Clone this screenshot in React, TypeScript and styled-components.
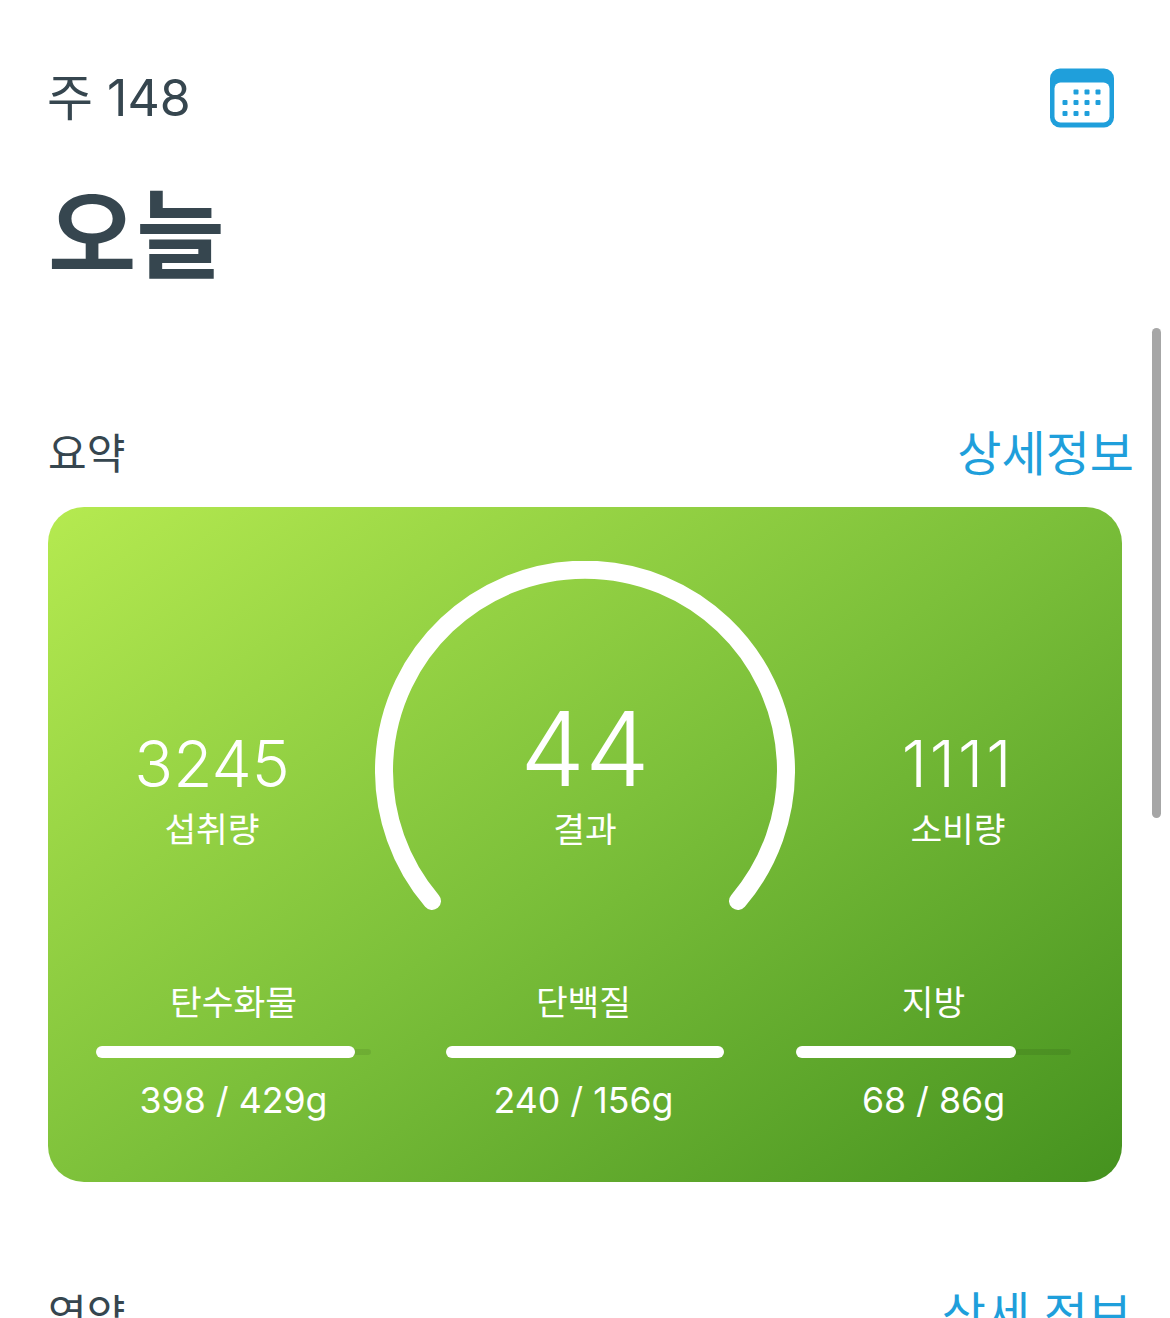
import styled, { createGlobalStyle } from "styled-components";

const FONT = `Inter, "Noto Sans CJK KR", sans-serif`;

const GlobalStyle = createGlobalStyle`
  html, body {
    margin: 0;
    padding: 0;
    background: #ffffff;
  }
`;

const macros = [
  { name: "탄수화물", value: "398 / 429g", percent: 94 },
  { name: "단백질", value: "240 / 156g", percent: 101 },
  { name: "지방", value: "68 / 86g", percent: 80 },
];

const CalendarIcon = () => (
  <svg width="64" height="60" viewBox="0 0 64 60">
    <rect width="64" height="59" y="0.5" rx="10" fill="#1f9fdb" />
    <rect x="4.5" y="14.5" width="55" height="40" rx="6" fill="#fff" />
    {[
      [26, 24],
      [37, 24],
      [48, 24],
      [15, 34.5],
      [26, 34.5],
      [37, 34.5],
      [48, 34.5],
      [15, 45.5],
      [26, 45.5],
      [37, 45.5],
    ].map(([x, y]) => (
      <rect key={`${x}-${y}`} x={x - 2.5} y={y - 2.5} width="5" height="5" rx="1" fill="#1f9fdb" />
    ))}
  </svg>
);

export default function App() {
  return (
    <Screen>
      <GlobalStyle />
      <Scrollbar />
      <Header>
        <Week>주 148</Week>
        <CalendarIcon />
      </Header>
      <Title>오늘</Title>
      <SectionHead>
        <SectionName>요약</SectionName>
        <DetailLink>상세정보</DetailLink>
      </SectionHead>
      <Card>
        <Summary>
          <Stat>
            <StatNumber>3245</StatNumber>
            <StatLabel>섭취량</StatLabel>
          </Stat>
          <Gauge>
            <GaugeArc viewBox="0 0 420 350">
              <path
                d="M 57 340 A 201 201 0 1 1 363 340"
                fill="none"
                stroke="#fff"
                strokeWidth="18"
                strokeLinecap="round"
              />
            </GaugeArc>
            <GaugeNumber>44</GaugeNumber>
            <GaugeLabel>결과</GaugeLabel>
          </Gauge>
          <Stat>
            <StatNumber $tracking={3}>1111</StatNumber>
            <StatLabel>소비량</StatLabel>
          </Stat>
        </Summary>
        <Macros>
          {macros.map((m) => (
            <Macro key={m.name}>
              <MacroName>{m.name}</MacroName>
              <Track>
                <Fill style={{ width: `${m.percent}%` }} />
              </Track>
              <MacroValue>{m.value}</MacroValue>
            </Macro>
          ))}
        </Macros>
      </Card>
      <NextHead>
        <SectionName>영양</SectionName>
        <DetailLink>상세 정보</DetailLink>
      </NextHead>
    </Screen>
  );
}

const Screen = styled.div`
  position: relative;
  width: 1170px;
  height: 1318px;
  overflow: hidden;
  box-sizing: border-box;
  padding: 68px 48px 0;
  background: #ffffff;
  font-family: ${FONT};
  color: #36464f;
`;

const Scrollbar = styled.div`
  position: absolute;
  top: 328px;
  left: 1152px;
  width: 9px;
  height: 490px;
  border-radius: 5px;
  background: #a6a6a6;
`;

const Header = styled.div`
  display: flex;
  justify-content: space-between;
  align-items: flex-start;
  width: 1066px;
  height: 60px;
`;

const Week = styled.div`
  margin-left: -1px;
  font-size: 50px;
  line-height: 60px;
  font-weight: 400;
`;

const Title = styled.h1`
  margin: 58px 0 0;
  height: 98px;
  font-size: 96px;
  line-height: 98px;
  font-weight: 700;
`;

const SectionHead = styled.div`
  display: flex;
  justify-content: space-between;
  align-items: center;
  width: 1086px;
  height: 60px;
  margin-top: 140px;
`;

const SectionName = styled.div`
  font-size: 42px;
  line-height: 48px;
  font-weight: 400;
`;

const DetailLink = styled.div`
  font-size: 48px;
  line-height: 60px;
  font-weight: 400;
  color: #1f9fdb;
`;

const Card = styled.div`
  box-sizing: border-box;
  width: 1074px;
  height: 675px;
  margin-top: 23px;
  padding: 54px 48px 0;
  border-radius: 36px;
  background: linear-gradient(145deg, #b5ea50 0%, #7cc03a 50%, #45921f 100%);
  color: #ffffff;
`;

const Summary = styled.div`
  display: grid;
  grid-template-columns: 232px 1fr 232px;
  height: 354px;
`;

const Stat = styled.div`
  display: flex;
  flex-direction: column;
  align-items: center;
  padding-top: 165px;
`;

const StatNumber = styled.div<{ $tracking?: number }>`
  font-size: 64px;
  line-height: 76px;
  font-weight: 300;
  letter-spacing: ${(p) => p.$tracking ?? 0}px;
`;

const StatLabel = styled.div`
  margin-top: 6px;
  font-size: 34.5px;
  line-height: 44px;
  font-weight: 400;
`;

const Gauge = styled.div`
  position: relative;
  display: flex;
  flex-direction: column;
  align-items: center;
  padding-top: 131px;
`;

const GaugeArc = styled.svg`
  position: absolute;
  top: 0;
  left: 50%;
  width: 420px;
  height: 350px;
  margin-left: -210px;
`;

const GaugeNumber = styled.div`
  font-size: 103px;
  line-height: 114px;
  font-weight: 300;
`;

const GaugeLabel = styled(StatLabel)`
  margin-top: 2px;
`;

const Macros = styled.div`
  display: grid;
  grid-template-columns: repeat(3, 275px);
  column-gap: 75px;
  margin-top: 66px;
`;

const Macro = styled.div`
  display: flex;
  flex-direction: column;
  align-items: center;
`;

const MacroName = styled.div`
  font-size: 34.5px;
  line-height: 44px;
  font-weight: 400;
`;

const Track = styled.div`
  display: flex;
  align-items: center;
  width: 100%;
  height: 6px;
  margin: 24px 0 23px;
  border-radius: 3px;
  background: rgba(0, 0, 0, 0.08);
`;

const Fill = styled.div`
  flex: none;
  height: 12px;
  border-radius: 6px;
  background: #ffffff;
`;

const MacroValue = styled.div`
  font-size: 35.7px;
  line-height: 44px;
  font-weight: 400;
`;

const NextHead = styled(SectionHead)`
  width: 1084px;
  margin-top: 103px;
`;
